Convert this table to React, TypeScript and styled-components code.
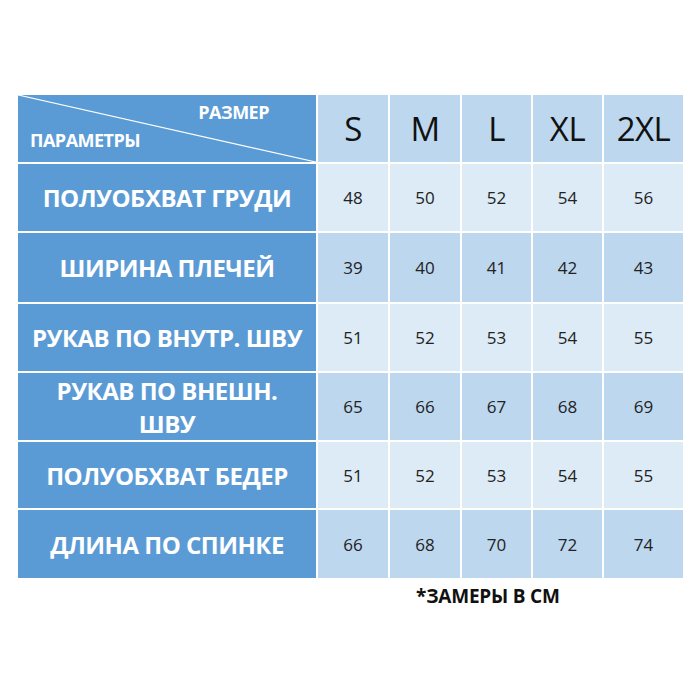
import { Fragment } from "react";
import styled, { createGlobalStyle } from "styled-components";

const GlobalStyle = createGlobalStyle`
    html, body {
        margin: 0;
        padding: 0;
        background: #ffffff;
    }
    body {
        font-family: "Open Sans", "Noto Sans", sans-serif;
    }
`;

const Page = styled.div`
    width: 700px;
    height: 700px;
    padding: 95px 0 0 18px;
    box-sizing: border-box;
    display: flex;
    flex-direction: column;
`;

const Table = styled.div`
    width: 665px;
    display: grid;
    grid-template-columns: 298px 70px 70px 69px 69px 79px;
    grid-template-rows: 67px 67px 69px 67px 67px 66px 68px;
    gap: 2px;
    background: #ffffff;
`;

const CornerCell = styled.div`
    position: relative;
    background: #5b9bd5;
    display: flex;
    flex-direction: column;
    justify-content: center;
    color: #ffffff;
    font-weight: 700;
    font-size: 18px;
    letter-spacing: -0.5px;
    line-height: 22px;
    overflow: hidden;
`;

const CornerTop = styled.div`
    align-self: flex-end;
    padding-right: 47px;
    margin-top: -6px;
`;

const CornerBottom = styled.div`
    padding-left: 12px;
    margin-top: 6px;
`;

const Diagonal = styled.svg`
    position: absolute;
    left: 0;
    top: 0;
    width: 100%;
    height: 100%;
`;

const ParamCell = styled.div`
    background: #5b9bd5;
    color: #ffffff;
    font-weight: 700;
    font-size: 24px;
    letter-spacing: -0.5px;
    line-height: 33px;
    display: flex;
    align-items: center;
    justify-content: center;
    text-align: center;
    white-space: pre-line;
`;

const SizeCell = styled.div`
    background: #bdd7ee;
    color: #111111;
    font-size: 33px;
    letter-spacing: -0.5px;
    display: flex;
    align-items: center;
    justify-content: center;
`;

const ValueCell = styled.div<{ $light: boolean }>`
    background: ${(p) => (p.$light ? "#ddebf7" : "#bdd7ee")};
    color: #222222;
    font-size: 17px;
    display: flex;
    align-items: center;
    justify-content: center;
`;

const Note = styled.div`
    margin: 5px 0 0 398px;
    font-weight: 700;
    font-size: 19px;
    letter-spacing: -0.2px;
    color: #111111;
`;

const sizes = ["S", "M", "L", "XL", "2XL"];

const rows = [
    { name: "ПОЛУОБХВАТ ГРУДИ", values: [48, 50, 52, 54, 56] },
    { name: "ШИРИНА ПЛЕЧЕЙ", values: [39, 40, 41, 42, 43] },
    { name: "РУКАВ ПО ВНУТР. ШВУ", values: [51, 52, 53, 54, 55] },
    { name: "РУКАВ ПО ВНЕШН.\nШВУ", values: [65, 66, 67, 68, 69] },
    { name: "ПОЛУОБХВАТ БЕДЕР", values: [51, 52, 53, 54, 55] },
    { name: "ДЛИНА ПО СПИНКЕ", values: [66, 68, 70, 72, 74] },
];

const App = () => {
    return (
        <>
            <GlobalStyle />
            <Page>
                <Table>
                    <CornerCell>
                        <Diagonal viewBox="0 0 298 67" preserveAspectRatio="none">
                            <line x1="0" y1="0" x2="298" y2="67" stroke="#ffffff" strokeWidth="1.2" />
                        </Diagonal>
                        <CornerTop>РАЗМЕР</CornerTop>
                        <CornerBottom>ПАРАМЕТРЫ</CornerBottom>
                    </CornerCell>
                    {sizes.map((s) => (
                        <SizeCell key={s}>{s}</SizeCell>
                    ))}
                    {rows.map((row, i) => (
                        <Fragment key={row.name}>
                            <ParamCell>{row.name}</ParamCell>
                            {row.values.map((v, j) => (
                                <ValueCell key={j} $light={i % 2 === 0}>
                                    {v}
                                </ValueCell>
                            ))}
                        </Fragment>
                    ))}
                </Table>
                <Note>*ЗАМЕРЫ В СМ</Note>
            </Page>
        </>
    );
};

export default App;
